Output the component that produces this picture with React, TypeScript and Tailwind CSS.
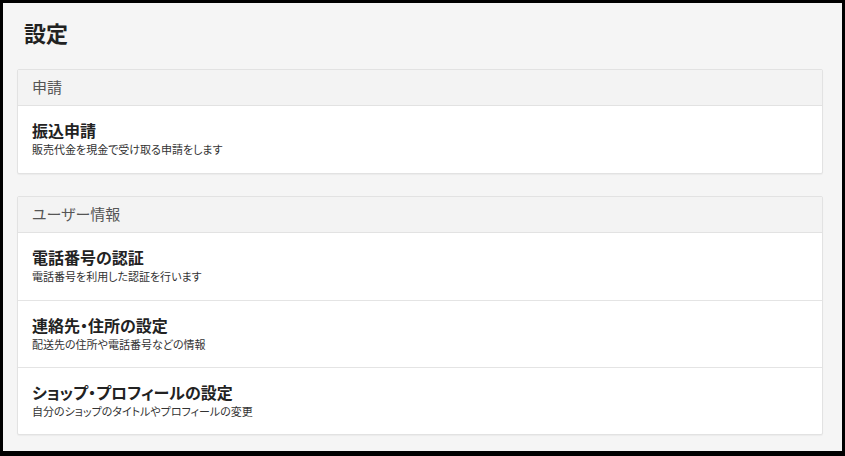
const font = { fontFamily: '"Noto Sans CJK JP", "Noto Sans", sans-serif' };

type Item = { title: string; desc: string };
type Section = { label: string; items: Item[] };

const sections: Section[] = [
  {
    label: "申請",
    items: [{ title: "振込申請", desc: "販売代金を現金で受け取る申請をします" }],
  },
  {
    label: "ユーザー情報",
    items: [
      { title: "電話番号の認証", desc: "電話番号を利用した認証を行います" },
      { title: "連絡先・住所の設定", desc: "配送先の住所や電話番号などの情報" },
      { title: "ショップ・プロフィールの設定", desc: "自分のショップのタイトルやプロフィールの変更" },
    ],
  },
];

function SettingsCard({ section }: { section: Section }) {
  return (
    <div className="bg-white border border-[#e2e2e2] rounded-[2px] shadow-[0_1px_1px_rgba(0,0,0,0.04)]">
      <div className="h-[36px] bg-[#f3f3f3] border-b border-[#e2e2e2] flex items-center px-[14px] text-[15px] text-[#555]">
        {section.label}
      </div>
      {section.items.map((item, i) => (
        <div
          key={item.title}
          className={`h-[67px] flex flex-col justify-center px-[14px] pb-[3px] ${i > 0 ? "border-t border-[#e4e4e4]" : ""}`}
        >
          <div className="text-[16px] font-bold text-[#222] leading-[22px]">{item.title}</div>
          <div className="text-[11px] text-[#333] leading-[16px]">{item.desc}</div>
        </div>
      ))}
    </div>
  );
}

export default function App() {
  return (
    <div
      className="w-[845px] h-[456px] bg-black pl-[3px] pt-[3px] pr-[3px] pb-[5px] [font-feature-settings:'palt']"
      style={font}
    >
      <div className="h-full bg-[#f5f5f5] pl-[14px] pr-[19px] pt-[13px]">
        <h1 className="text-[22px] font-bold text-[#222] leading-[32px] pl-[7px] mb-[21px]">設定</h1>
        <div className="flex flex-col gap-[22px]">
          {sections.map((s) => (
            <SettingsCard key={s.label} section={s} />
          ))}
        </div>
      </div>
    </div>
  );
}
